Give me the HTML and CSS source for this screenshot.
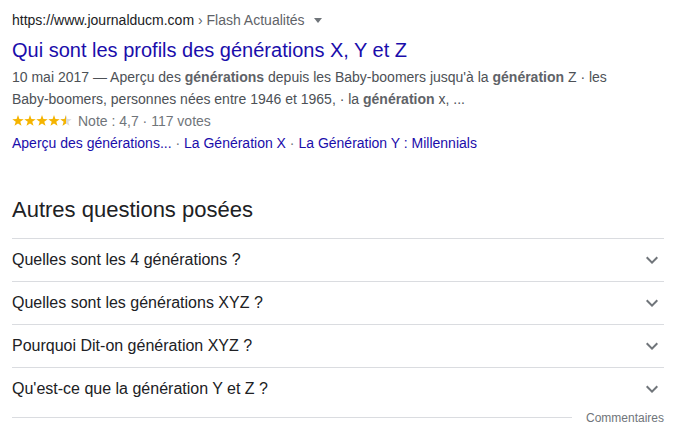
FILE: index.html
```html
<!DOCTYPE html>
<html lang="fr">
<head>
<meta charset="utf-8">
<title>Résultat</title>
<link rel="stylesheet" href="styles.css">
</head>
<body>
<div class="page">
  <div class="result">
    <div class="url"><span class="domain">https://www.journalducm.com</span> <span class="crumb">› Flash Actualités</span><span class="tri"></span></div>
    <h3 class="title">Qui sont les profils des générations X, Y et Z</h3>
    <div class="snippet">10 mai 2017 — Aperçu des <b>générations</b> depuis les Baby-boomers jusqu'à la <b>génération</b> Z · les Baby-boomers, personnes nées entre 1946 et 1965, · la <b>génération</b> x, ...</div>
    <div class="rating">
      <span class="stars">
        <svg width="61" height="12" viewBox="0 0 61 12">
          <defs>
            <path id="st" d="M6 0L7.41 4.06L11.71 4.15L8.28 6.74L9.53 10.85L6 8.4L2.47 10.85L3.72 6.74L0.29 4.15L4.59 4.06Z"/>
          </defs>
          <use href="#st" x="0" fill="#f5b400"/>
          <use href="#st" x="12" fill="#f5b400"/>
          <use href="#st" x="24" fill="#f5b400"/>
          <use href="#st" x="36" fill="#f5b400"/>
          <use href="#st" x="48" fill="#dadce0"/>
          <path d="M54 0L54 8.4L50.47 10.85L51.72 6.74L48.29 4.15L52.59 4.06Z" fill="#f5b400"/>
        </svg>
      </span>
      <span class="note">Note : 4,7 · 117 votes</span>
    </div>
    <div class="sitelinks"><a>Aperçu des générations...</a><span class="sep"> · </span><a>La Génération X</a><span class="sep"> · </span><a>La Génération Y : Millennials</a></div>
  </div>

  <div class="paa">
    <h2 class="paa-title">Autres questions posées</h2>
    <div class="q"><span>Quelles sont les 4 générations ?</span><svg class="chev" width="24" height="24" viewBox="0 0 24 24"><path d="M16.59 8.59L12 13.17 7.41 8.59 6 10l6 6 6-6z"/></svg></div>
    <div class="q"><span>Quelles sont les générations XYZ ?</span><svg class="chev" width="24" height="24" viewBox="0 0 24 24"><path d="M16.59 8.59L12 13.17 7.41 8.59 6 10l6 6 6-6z"/></svg></div>
    <div class="q"><span>Pourquoi Dit-on génération XYZ ?</span><svg class="chev" width="24" height="24" viewBox="0 0 24 24"><path d="M16.59 8.59L12 13.17 7.41 8.59 6 10l6 6 6-6z"/></svg></div>
    <div class="q"><span>Qu'est-ce que la génération Y et Z ?</span><svg class="chev" width="24" height="24" viewBox="0 0 24 24"><path d="M16.59 8.59L12 13.17 7.41 8.59 6 10l6 6 6-6z"/></svg></div>
    <div class="feedback"><span class="line"></span><span class="fb">Commentaires</span></div>
  </div>
</div>
</body>
</html>
```
FILE: styles.css
```css
* { box-sizing: border-box; }
html, body { margin: 0; padding: 0; background: #fff; }
body {
  font-family: "Liberation Sans", Arial, sans-serif;
  color: #202124;
}
.page {
  width: 652px;
  margin-left: 12px;
  padding-top: 10px;
}
.result { width: 600px; }
.url {
  font-size: 14px;
  line-height: 20px;
  height: 20px;
  white-space: nowrap;
}
.domain { color: #202124; }
.crumb { color: #5f6368; }
.tri {
  display: inline-block;
  vertical-align: middle;
  width: 0; height: 0;
  margin-left: 9px;
  margin-top: -2px;
  border-left: 4px solid transparent;
  border-right: 4px solid transparent;
  border-top: 5px solid #70757a;
}
.title {
  margin: 7px 0 3px;
  font-size: 20px;
  line-height: 26px;
  font-weight: normal;
  color: #1a0dab;
}
.snippet {
  font-size: 14px;
  line-height: 22px;
  color: #4d5156;
}
.snippet b { color: #5f6368; font-weight: bold; }
.rating {
  font-size: 14px;
  line-height: 22px;
  height: 22px;
  display: flex;
  align-items: center;
  color: #70757a;
}
.stars { display: flex; margin-right: 5px; }
.stars svg { display: block; }
.sitelinks {
  font-size: 14px;
  line-height: 22px;
  color: #1a0dab;
}
.sitelinks .sep { color: #70757a; }
.paa { margin-top: 42px; }
.paa-title {
  margin: 0 0 14px;
  font-size: 22px;
  line-height: 28px;
  font-weight: normal;
  color: #202124;
}
.q {
  border-top: 1px solid #dadce0;
  height: 43px;
  display: flex;
  align-items: center;
  justify-content: space-between;
  font-size: 16px;
  color: #202124;
}
.chev { fill: #70757a; display: block; }
.feedback {
  display: flex;
  align-items: center;
  height: 15px;
}
.line {
  flex: 1;
  border-top: 1px solid #dadce0;
  margin-right: 14px;
}
.fb {
  font-size: 12px;
  line-height: 14px;
  color: #70757a;
}
```
